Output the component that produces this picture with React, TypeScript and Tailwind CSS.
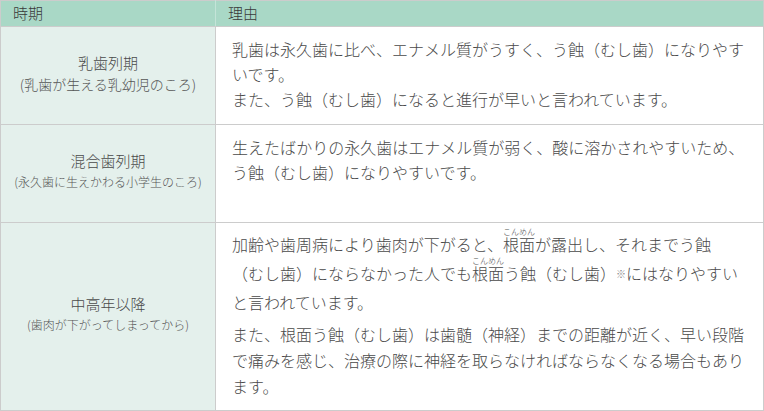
const rows = [
  {
    title: "乳歯列期",
    note: "(乳歯が生える乳幼児のころ)",
    noteSize: "text-[14px]",
    height: "h-[98px]",
  },
  {
    title: "混合歯列期",
    note: "(永久歯に生えかわる小学生のころ)",
    noteSize: "text-[12px]",
    height: "h-[98px]",
  },
  {
    title: "中高年以降",
    note: "(歯肉が下がってしまってから)",
    noteSize: "text-[12px]",
    height: "",
  },
];

const Konmen = () => (
  <ruby>
    根面
    <rt className="text-[8px] leading-none text-[#555]">こんめん</rt>
  </ruby>
);

const reasons = [
  <div className="pt-[10px] pb-[10px] leading-[25px]">
    乳歯は永久歯に比べ、エナメル質がうすく、う蝕（むし歯）になりやすいです。
    <br />
    また、う蝕（むし歯）になると進行が早いと言われています。
  </div>,
  <div className="pt-[10px] pb-[10px] leading-[25px]">
    生えたばかりの永久歯はエナメル質が弱く、酸に溶かされやすいため、う蝕（むし歯）になりやすいです。
  </div>,
  <div className="pt-[4px] pb-[11px]">
    <p className="leading-[29px]">
      加齢や歯周病により歯肉が下がると、<Konmen />が露出し、それまでう蝕
      <br />
      （むし歯）にならなかった人でも<Konmen />う蝕（むし歯）
      <span className="text-[10px] text-[#888] align-top">※</span>
      にはなりやすいと言われています。
    </p>
    <p className="mt-[4px] leading-[26px]">
      また、根面う蝕（むし歯）は歯髄（神経）までの距離が近く、早い段階で痛みを感じ、治療の際に神経を取らなければならなくなる場合もあります。
    </p>
  </div>,
];

export default function App() {
  return (
    <div
      className="w-[764px] h-[411px] bg-white text-[#4a4a4a] font-light"
      style={{ fontFamily: '"Noto Sans CJK JP", "Noto Sans", sans-serif' }}
    >
      <table className="w-[764px] table-fixed border-collapse border border-[#cccccc]">
        <thead>
          <tr className="h-[26px] bg-[#a9d8c6] text-[15px] text-[#3a3a3a]">
            <th className="w-[215px] border-r border-[#c4e4d8] border-b border-b-[#cccccc] pl-[12px] text-left font-light">
              時期
            </th>
            <th className="border-b border-[#cccccc] pl-[12px] text-left font-light">
              理由
            </th>
          </tr>
        </thead>
        <tbody>
          {rows.map((row, i) => (
            <tr key={row.title} className={`${row.height} border-b border-[#cccccc]`}>
              <td className="border-r border-[#cccccc] bg-[#e4f0ec] pb-[6px] text-center align-middle">
                <div className="text-[15px] leading-[22px]">{row.title}</div>
                <div className={`${row.noteSize} leading-[20px] text-[#555]`}>
                  {row.note}
                </div>
              </td>
              <td className="align-top pl-[16px] pr-[14px] text-[16px]">
                {reasons[i]}
              </td>
            </tr>
          ))}
        </tbody>
      </table>
    </div>
  );
}
